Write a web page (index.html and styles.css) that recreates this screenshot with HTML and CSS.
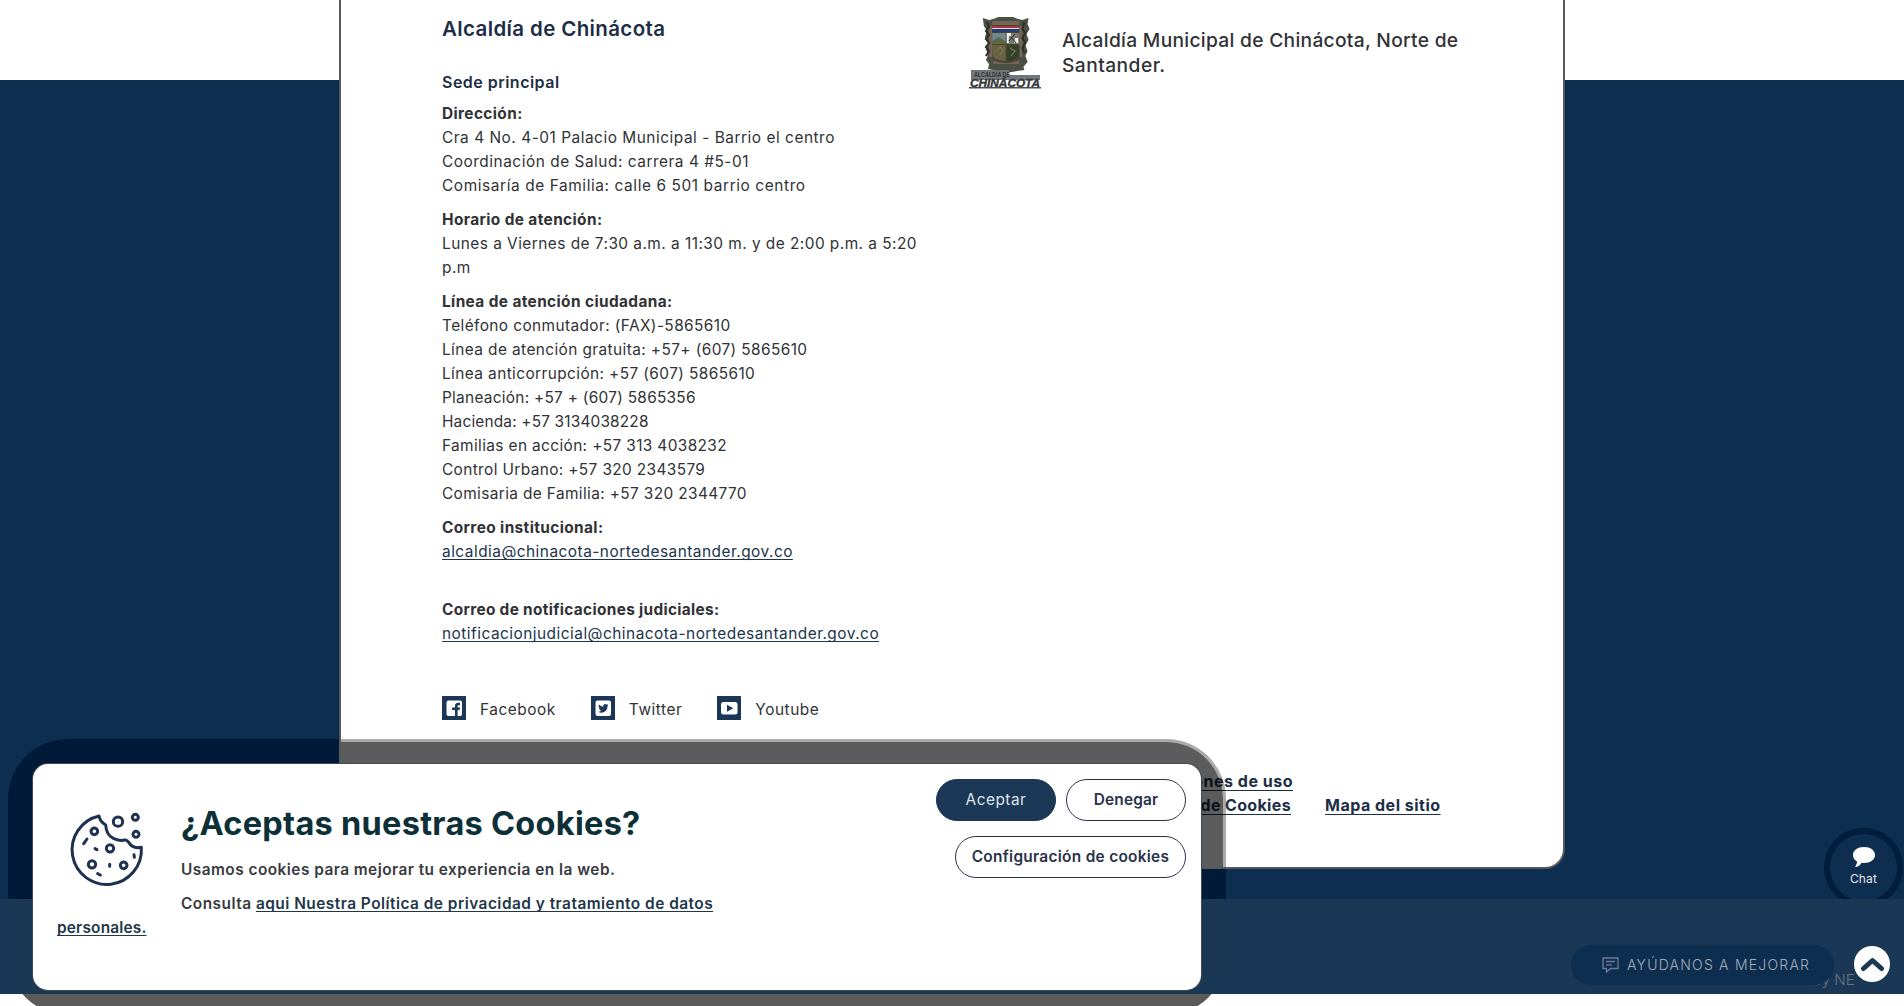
FILE: index.html
```html
<!DOCTYPE html>
<html lang="es">
<head>
<meta charset="utf-8">
<title>Alcaldía de Chinácota</title>
<link rel="stylesheet" href="styles.css">
</head>
<body>
<footer class="site-footer">
  <div class="glow glow-under"></div>
  <section class="card">
    <div class="columns">
      <div class="info">
        <h2 class="entity">Alcaldía de Chinácota</h2>
        <h3 class="office">Sede principal</h3>
        <div class="group wide"><b>Dirección:</b><span>Cra 4 No. 4-01 Palacio Municipal - Barrio el centro</span><span>Coordinación de Salud: carrera 4 #5-01</span><span class="wider">Comisaría de Familia: calle 6 501 barrio centro</span></div>
        <div class="group hours"><b>Horario de atención:</b><span>Lunes a Viernes de 7:30 a.m. a 11:30 m. y de 2:00 p.m. a 5:20</span><span>p.m</span></div>
        <div class="group"><b>Línea de atención ciudadana:</b><span class="medium">Teléfono conmutador: (FAX)-5865610</span><span class="medium">Línea de atención gratuita: +57+ (607) 5865610</span><span class="medium">Línea anticorrupción: +57 (607) 5865610</span><span class="narrow">Planeación: +57 + (607) 5865356</span><span class="narrower">Hacienda: +57 3134038228</span><span>Familias en acción: +57 313 4038232</span><span>Control Urbano: +57 320 2343579</span><span>Comisaria de Familia: +57 320 2344770</span></div>
        <div class="group mail"><b>Correo institucional:</b><a>alcaldia@chinacota-nortedesantander.gov.co</a></div>
        <div class="group mail judicial"><b>Correo de notificaciones judiciales:</b><a>notificacionjudicial@chinacota-nortedesantander.gov.co</a></div>
        <nav class="social">
          <a><svg width="24" height="24" viewBox="0 0 24 24"><path fill="#1c3657" d="M0 0h24v24H0z"/><rect x="4.5" y="4.5" width="15.5" height="15.5" rx="2" fill="#fff"/><path fill="#1c3657" d="M13 20v-6h-3v-2.400h3V10c0-2.300 1.300-3.200 3.200-3.200H18V9.300h-1.200c-.9 0-1.200.3-1.200 1v1.300H18l-.4 2.400h-2V20z"/></svg>Facebook</a>
          <a><svg width="24" height="24" viewBox="0 0 24 24"><path fill="#1c3657" d="M0 0h24v24H0z"/><rect x="4.500" y="4.500" width="15.500" height="15.500" rx="2" fill="#fff"/><path fill="#1c3657" d="M17.500 9.100q-.6.300-1.200.3.700-.4.900-1.100-.6.400-1.300.5a2.100 2.100 0 0 0-3.600 1.900Q9.700 10.600 7.900 8.600q-1 1.800.7 2.900-.5 0-1-.3 0 1.600 1.700 2.100h-1q.5 1.400 2 1.500-1.300 1-3.100.9c4.300 2.600 9.400-.2 9.300-5.600q.6-.4 1-1z"/></svg>Twitter</a>
          <a><svg width="24" height="24" viewBox="0 0 24 24"><path fill="#1c3657" d="M0 0h24v24H0z"/><rect x="4" y="6" width="16.500" height="12.500" rx="2.500" fill="#fff"/><path fill="#1c3657" d="M10 8.800v7l6.300-3.500z"/></svg>Youtube</a>
        </nav>
      </div>
      <div class="brand">
        <svg width="72" height="72" viewBox="0 0 72 72">
          <g transform="translate(5.500 0) scale(1.040 1)">
          <path d="M8 1l6 2 4-1 5-2h14l5 2 4 1 6-2-1 6 2 5-3 5 2 6-3 5 2 6-2 5 2 6-4 5 1 3-7 1-5 1H23l-5-2-5-1 1-5-3-4 2-5-2-6 2-6-3-6 2-6-3-5z" fill="#4c5043"/>
          <path d="M17 4h26v4H17zM14 9h3v31h-3zM43 9h3v31h-3zM18 44h25v3H18z" fill="#756457"/>
          <path d="M17 8h26v32q0 5-13 6-13-1-13-6z" fill="#4b4434"/>
          <path d="M17 9h26v2H17z" fill="#a8343d"/><path d="M17 11h26v1H17z" fill="#ddd"/><path d="M17 12h26v3H17z" fill="#293d73"/>
          <path d="M17 16h13v10H17z" fill="#6f8792"/><path d="M17 24l6-4 7 4v3H17z" fill="#5d6945"/><path d="M31 16h12v11H31z" fill="#7b7b74"/><path d="M31 16h4v3h-2v7h-2zM39 21h3v5h-4z" fill="#f0f0ea"/><path d="M33 24l6-7M35 20l5 6" stroke="#303b3e"/>
          <path d="M17 28h13v16q-13-1-13-6z" fill="#696344"/><path d="M31 28h12v10q0 5-12 6z" fill="#33432a"/><path d="M22 33l3-3 3 4-4 4M34 31l5 3-4 5" stroke="#857a54" fill="none"/>
          <path d="M12 5l2 5-3 4 3 4-3 4 3 4-3 4 3 4-3 5M48 5l-2 7 3 4-3 5 3 5-3 5 2 5" fill="none" stroke="#283224" stroke-width="2"/>
          </g>
          <path d="M2 53h38v5h31v5H2z" fill="#72767a"/>
          <text class="crest-small" x="5" y="60" textLength="36" lengthAdjust="spacingAndGlyphs">ALCALDÍA DE</text>
          <text class="crest-name" x="1" y="70" textLength="70" lengthAdjust="spacingAndGlyphs">CHINÁCOTA</text>
          <path d="M0 70h72v1.500H0z" fill="#4a4f52"/>
        </svg>
        <p>Alcaldía Municipal de Chinácota, Norte de<br><span class="santander">Santander.</span></p>
      </div>
    </div>
    <nav class="legal"><div><a>Condiciones de uso</a><br><a class="policy">Política de Cookies</a></div><a class="map">Mapa del sitio</a></nav>
    <div class="glow glow-card"></div>
  </section>
  <button class="chat"><svg width="24" height="22" viewBox="0 0 24 22"><path fill="#fff" d="M12 1C5.500 1 1 4.500 1 9c0 3 1.500 5 4 6.500.2 2-1 3.800-2 5.500 3 0 5.300-1.600 6.500-4.200 7.500 1 13.500-2.500 13.500-7.800C23 4.500 18.500 1 12 1z"/></svg>Chat</button>
  <div class="bottom-bar"><span class="powered">by NE</span></div>
</footer>
<section class="cookies">
  <div class="message">
    <div class="cookie-icon"><svg width="90" height="95" viewBox="0 0 270 285" fill="none" stroke="#1f3150" stroke-width="9" stroke-linecap="round" stroke-linejoin="round">
      <path d="M117 48A104 104 0 1 0 244 142Q223 146 211 134 202 118 193 120 181 124 160 115 139 105 137 75 120 65 117 48z"/>
      <circle cx="103" cy="94" r="10"/><circle cx="174" cy="65" r="14"/><circle cx="226" cy="52" r="9"/><circle cx="228" cy="103" r="9"/><circle cx="150" cy="145" r="11"/><circle cx="96" cy="193" r="11"/><circle cx="191" cy="196" r="10"/>
      <path d="M81 117L71 131M105 146l6 3M149 193v6M113 221l8 4M222 164l1 8"/>
    </svg></div>
    <h1>¿Aceptas nuestras Cookies?</h1>
    <p>Usamos cookies para mejorar tu experiencia en la web.</p>
    <p class="policy-line">Consulta <a>aqui Nuestra Política de privacidad y tratamiento de datos <span class="last">personales.</span></a></p>
  </div>
  <div class="actions">
    <button class="btn accept">Aceptar</button><button class="btn deny">Denegar</button><button class="btn config">Configuración de cookies</button>
  </div>
</section>
<button class="improve"><svg width="17" height="16" viewBox="0 0 17 16" fill="none" stroke="#6f7a96" stroke-width="1.300"><path d="M1 1h15v10.500H8.500L4.500 15v-3.500H1zM4 4.500h9M4 7.800h6"/></svg>AYÚDANOS A MEJORAR</button>
<button class="to-top"><svg width="25" height="17" viewBox="0 0 25 17"><path d="M3.500 12.500l9-8 9 8" fill="none" stroke="#1c3857" stroke-width="5" stroke-linecap="round" stroke-linejoin="round"/></svg></button>
</body>
</html>
```
FILE: styles.css
```css
* { box-sizing: border-box; }
body { margin: 0; height: 1006px; overflow: hidden; position: relative; background: #fff; color: #303235; font: 15.4px/24px Inter, sans-serif; letter-spacing: .380px; }
h1, h2, h3, p { margin: 0; }
button { font: inherit; letter-spacing: inherit; border: 0; padding: 0; }
.site-footer { position: relative; height: 1006px; background: linear-gradient(#fff 80px, #0e2e50 80px, #0e2e50 994px, #fff 994px); }

.card { position: relative; width: 1226px; height: 869px; margin: 0 auto; padding: 17px 0 0 101px; background: #fff; border: 2px solid #55585d; border-top: 0; border-radius: 0 0 20px 20px; overflow: hidden; }
.columns { display: flex; }
.info { width: 527px; }
.entity { font-size: 20.500px; font-weight: 600; letter-spacing: .370px; color: #1c2e46; margin-bottom: 29px; }
.office { font-size: 16px; font-weight: 600; letter-spacing: .480px; color: #1c2e46; margin-bottom: 8px; }
.group { margin-bottom: 10px; white-space: nowrap; }
.group > * { display: block; }
.group b { font-weight: 700; letter-spacing: .390px; }
.group a { width: max-content; text-decoration: underline; color: #20344b; letter-spacing: .490px; }
.group a, .cookies a { text-decoration-skip-ink: none; text-underline-offset: 2px; text-decoration-thickness: 1px; }
.wide span { letter-spacing: .530px; }
.group .wider { letter-spacing: .600px; }
.hours span { letter-spacing: .470px; }
.group .medium { letter-spacing: .410px; }
.group .narrow { letter-spacing: .280px; }
.group .narrower { letter-spacing: .180px; }
.mail { margin-bottom: 34px; }
.judicial b { letter-spacing: .325px; }
.social { display: flex; gap: 35px; margin-top: 50px; letter-spacing: .550px; }
.social a { display: flex; gap: 14px; line-height: 28px; height: 24px; }

.brand { display: flex; gap: 21px; font-size: 19.200px; font-weight: 500; line-height: 25px; letter-spacing: .300px; white-space: nowrap; }
.brand p { padding-top: 11px; }
.brand .santander { letter-spacing: .450px; }
.crest-small { font: 700 7px/1 "Liberation Sans", sans-serif; letter-spacing: 0; fill: #34383a; }
.crest-name { font: italic 700 11.500px/1 "Liberation Sans", sans-serif; letter-spacing: 0; fill: #34383a; stroke: #34383a; stroke-width: .4px; }

.legal { display: flex; align-items: flex-end; gap: 32px; margin: 49px 0 0 701px; font-size: 16px; font-weight: 700; color: #1c2e46; letter-spacing: .500px; white-space: nowrap; }
.legal div { width: 150px; direction: rtl; }
.legal a { direction: ltr; display: inline-block; text-decoration: underline; text-underline-offset: 3px; text-decoration-thickness: 1px; }
.legal .policy { letter-spacing: .350px; margin-right: 2px; }

.glow { position: absolute; width: 1218px; height: 276px; border-radius: 60px; }
.glow-under { left: 8px; top: 739px; background: linear-gradient(#001a38 255px, #5b5b5b 255px); }
.glow-card { left: -333px; top: 739px; background: rgba(0, 0, 0, .64); background-clip: padding-box; border: 3px solid rgba(0, 0, 0, .33); }

.bottom-bar { position: absolute; left: 0; right: 0; top: 899px; height: 95px; background: rgba(27, 56, 85, .96); }
.powered { position: absolute; left: 1813px; top: 69px; font-size: 15px; font-weight: 300; letter-spacing: 0; color: #6c7480; }

.cookies { position: absolute; left: 33px; top: 764px; width: 1168px; height: 226px; background: #fff; border-radius: 15px; padding: 0 15px 0 24px; display: flex; justify-content: space-between; box-shadow: 0 0 0 1px #3e4a58; color: #383a3f; font-weight: 600; letter-spacing: .470px; }
.message { width: 680px; }
.cookie-icon { float: left; width: 124px; height: 152px; padding: 36px 0 0 3px; }
.message h1 { font-size: 32.500px; line-height: 38px; font-weight: 700; letter-spacing: .280px; color: #0d3038; padding-top: 41px; }
.message p { padding-top: 15px; }
.message .policy-line { padding-top: 10px; letter-spacing: .490px; }
.message a { text-decoration: underline; color: #22364a; }
.last { letter-spacing: .200px; }
.actions { width: 260px; padding-top: 15px; display: flex; flex-wrap: wrap; justify-content: flex-end; align-content: flex-start; gap: 15px 10px; }
.btn { width: 120px; height: 42px; border-radius: 21px; border: 1px solid #2c3548; background: #fff; color: #29304a; font-weight: 600; letter-spacing: .150px; }
.accept { background: #1c3857; border-color: #1c3857; color: #dfe4ea; font-weight: 400; letter-spacing: .500px; }
.config { width: 231px; letter-spacing: .300px; }

.chat { position: absolute; left: 1824px; top: 828px; width: 79px; height: 79px; border-radius: 50%; background: #0e2e50; border: 6px solid #001d3c; color: #e4e7ec; font-size: 12px; line-height: 18px; letter-spacing: .160px; display: flex; flex-direction: column; align-items: center; gap: 2px; padding-top: 12px; }
.improve { position: absolute; left: 1571px; top: 945px; width: 263px; height: 40px; border-radius: 20px; background: #0e2e50; color: #a3adbb; font-size: 14px; font-weight: 300; letter-spacing: 1.220px; display: flex; align-items: center; gap: 8px; padding-left: 31px; white-space: nowrap; }
.to-top { position: absolute; left: 1854px; top: 946px; width: 36px; height: 36px; border-radius: 50%; background: #fff; display: grid; place-items: center; }
```
